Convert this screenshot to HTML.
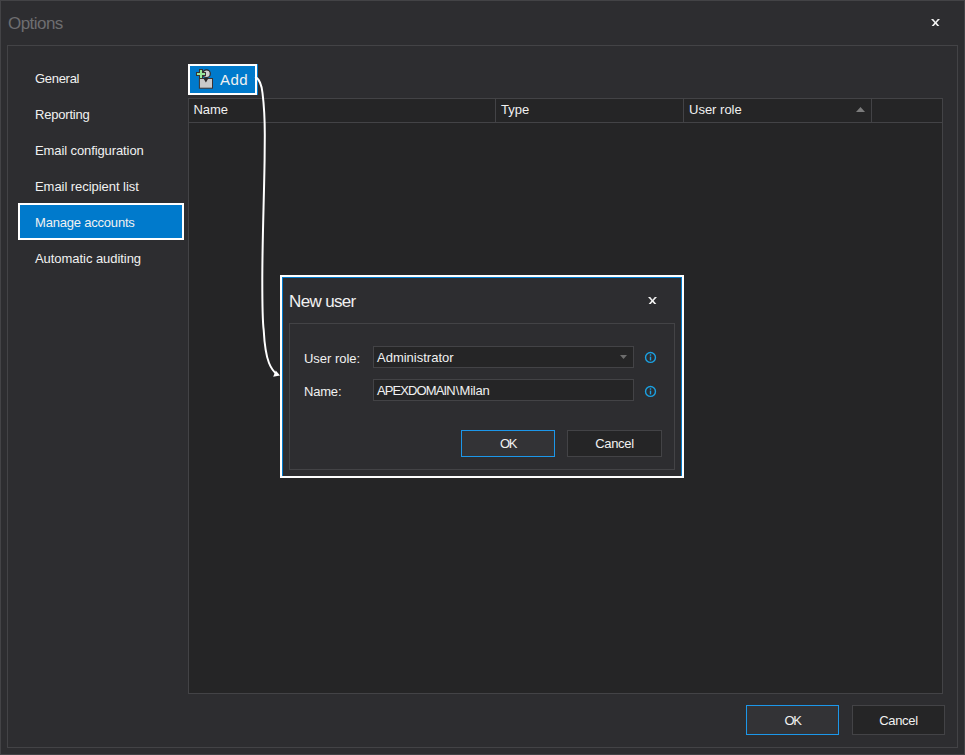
<!DOCTYPE html>
<html>
<head>
<meta charset="utf-8">
<title>Options</title>
<style>
html,body{margin:0;padding:0;}
body{width:965px;height:755px;overflow:hidden;background:#2d2d30;position:relative;font-family:"Liberation Sans",sans-serif;color:#f1f1f1;font-size:13px;}
.abs{position:absolute;box-sizing:border-box;}
.t{position:absolute;white-space:nowrap;line-height:1;}
#win{left:0;top:0;width:965px;height:755px;border:1px solid #434346;background:#2d2d30;}
#panel{left:7px;top:45px;width:951px;height:703px;border:1px solid #434346;}
#title{left:8px;top:15px;font-size:17px;color:#6e6e70;letter-spacing:-0.55px;}
.nav{left:35px;font-size:13px;}
#sel{left:18px;top:203px;width:166px;height:37px;background:#007acc;border:2px solid #fff;}
#grid{left:188px;top:98px;width:755px;height:596px;border:1px solid #434346;background:#252526;}
#ghead{left:189px;top:99px;width:753px;height:24px;border-bottom:1px solid #434346;}
.sep{top:99px;width:1px;height:23px;background:#434346;}
.btn{border:1px solid #434346;background:#252526;}
.btn.def{border-color:#1c97ea;background:#333336;}
#dlg{left:280px;top:275px;width:404px;height:203px;border:2px solid #fff;background:#2d2d30;}
#dlgblue{left:282px;top:277px;width:400px;height:199px;border:1px solid #007acc;border-bottom:none;}
#dpanel{left:289px;top:323px;width:386px;height:147px;border:1px solid #434346;}
.field{left:373px;width:261px;height:22px;border:1px solid #434346;background:#252526;}
</style>
</head>
<body>
<div class="abs" id="win"></div>
<div class="t" id="title">Options</div>
<svg class="abs" style="left:931px;top:18.7px" width="9" height="7.7" viewBox="0 0 9 8" preserveAspectRatio="none"><path d="M0 0 H2.2 L4.5 2.75 L6.8 0 H9 L5.6 4 L9 8 H6.8 L4.5 5.25 L2.2 8 H0 L3.4 4 Z" fill="#f1f1f1"/></svg>
<div class="abs" id="panel"></div>

<div class="t nav" style="top:72px;letter-spacing:-0.3px">General</div>
<div class="t nav" style="top:108px;letter-spacing:-0.2px">Reporting</div>
<div class="t nav" style="top:144px;letter-spacing:-0.1px">Email configuration</div>
<div class="t nav" style="top:180px;letter-spacing:-0.05px">Email recipient list</div>
<div class="abs" id="sel"></div>
<div class="t nav" style="top:216px;letter-spacing:-0.2px">Manage accounts</div>
<div class="t nav" style="top:252px;letter-spacing:-0.05px">Automatic auditing</div>

<!-- Add button -->
<div class="abs" style="left:188px;top:64px;width:70px;height:31px;background:#007acc;"></div>
<div class="abs" style="left:188px;top:64px;width:69px;height:31px;border:2px solid #fff;"></div>
<svg class="abs" style="left:195px;top:68px" width="20" height="22" viewBox="0 0 20 22">
  <rect x="4.4" y="10.5" width="13.1" height="9.7" fill="#c9c9c9" stroke="#3a3232" stroke-width="1"/>
  <circle cx="11.5" cy="5.7" r="3.8" fill="#cfcfcf" stroke="#2f2828" stroke-width="1.2"/>
  <path d="M8.2 10 L13.6 10 L10.9 14.4 Z" fill="#2a2626"/>
  <path d="M4 1 h4 v3 h3 v4 h-3 v2.9 h-4 v-2.9 h-3 v-4 h3 z" fill="#3a3232"/>
  <path d="M5 2 h2 v3 h3 v2 h-3 v2.9 h-2 v-2.9 h-3 v-2 h3 z" fill="#98e698"/>
</svg>
<div class="t" style="left:220px;top:72px;font-size:15px;letter-spacing:0.5px;">Add</div>

<!-- grid -->
<div class="abs" id="grid"></div>
<div class="abs" id="ghead"></div>
<div class="abs sep" style="left:495px"></div>
<div class="abs sep" style="left:683px"></div>
<div class="abs sep" style="left:871px"></div>
<div class="t" style="left:193.5px;top:103px;letter-spacing:-0.1px;">Name</div>
<div class="t" style="left:501px;top:103px;">Type</div>
<div class="t" style="left:689px;top:103px;">User role</div>
<svg class="abs" style="left:856px;top:107px" width="9" height="5" viewBox="0 0 9 5"><path d="M0 5 L4.5 0 L9 5 Z" fill="#7c7c7c"/></svg>

<!-- bottom buttons -->
<div class="abs btn def" style="left:746px;top:705px;width:93px;height:30px;"></div>
<div class="t" style="left:746px;top:714px;width:93px;text-align:center;letter-spacing:-1.4px;">OK</div>
<div class="abs btn" style="left:852px;top:705px;width:93px;height:30px;"></div>
<div class="t" style="left:852px;top:714px;width:93px;text-align:center;letter-spacing:-0.3px;">Cancel</div>

<!-- arrow -->
<svg class="abs" style="left:0;top:0" width="965" height="755" viewBox="0 0 965 755">
  <path d="M255,77 C259,78 262,86 262.5,93 C264,105 264.8,120 264.8,135 L264.6,160 C264,200 262.3,240 262.3,280 C262.3,310 263,325 263.7,330 C264.5,345 267,358 269,363 C271,368 274,372 277,374.5" stroke="#fff" stroke-width="2" fill="none"/>
  <path d="M280,375.5 L275.8,370.5 L273.2,376.8 Z" fill="#fff"/>
</svg>

<!-- dialog -->
<div class="abs" id="dlg"></div>
<div class="abs" id="dlgblue"></div>
<div class="t" style="left:289px;top:293px;font-size:17px;letter-spacing:-0.65px;">New user</div>
<svg class="abs" style="left:648px;top:296.7px" width="9" height="7.7" viewBox="0 0 9 8" preserveAspectRatio="none"><path d="M0 0 H2.2 L4.5 2.75 L6.8 0 H9 L5.6 4 L9 8 H6.8 L4.5 5.25 L2.2 8 H0 L3.4 4 Z" fill="#f1f1f1"/></svg>
<div class="abs" id="dpanel"></div>
<div class="t" style="left:304px;top:352px;letter-spacing:-0.03px;">User role:</div>
<div class="t" style="left:304px;top:385px;letter-spacing:-0.2px;">Name:</div>
<div class="abs field" style="top:346px"></div>
<div class="abs field" style="top:379px"></div>
<div class="t" style="left:377px;top:351px;">Administrator</div>
<div class="t" style="left:377px;top:384px;"><span style="letter-spacing:-0.9px">APEXDOMAIN</span><span style="margin-left:1px;letter-spacing:0.2px">\</span><span style="letter-spacing:-0.2px">Milan</span></div>
<svg class="abs" style="left:620px;top:355px" width="7" height="4" viewBox="0 0 7 4"><path d="M0 0 L7 0 L3.5 4 Z" fill="#6d6d6d"/></svg>
<svg class="abs" style="left:644px;top:351px" width="13" height="13" viewBox="0 0 13 13"><circle cx="6.5" cy="6.4" r="4.95" fill="none" stroke="#1ba1e2" stroke-width="1.4"/><rect x="5.8" y="5.6" width="1.4" height="3.8" fill="#1ba1e2"/><rect x="5.8" y="3.3" width="1.4" height="1.4" fill="#1ba1e2"/></svg>
<svg class="abs" style="left:644px;top:385px" width="13" height="13" viewBox="0 0 13 13"><circle cx="6.5" cy="6.4" r="4.95" fill="none" stroke="#1ba1e2" stroke-width="1.4"/><rect x="5.8" y="5.6" width="1.4" height="3.8" fill="#1ba1e2"/><rect x="5.8" y="3.3" width="1.4" height="1.4" fill="#1ba1e2"/></svg>
<div class="abs btn def" style="left:461px;top:430px;width:94px;height:27px;"></div>
<div class="t" style="left:461px;top:437px;width:94px;text-align:center;letter-spacing:-1.4px;">OK</div>
<div class="abs btn" style="left:567px;top:430px;width:95px;height:27px;"></div>
<div class="t" style="left:567px;top:437px;width:95px;text-align:center;letter-spacing:-0.3px;">Cancel</div>
</body>
</html>
